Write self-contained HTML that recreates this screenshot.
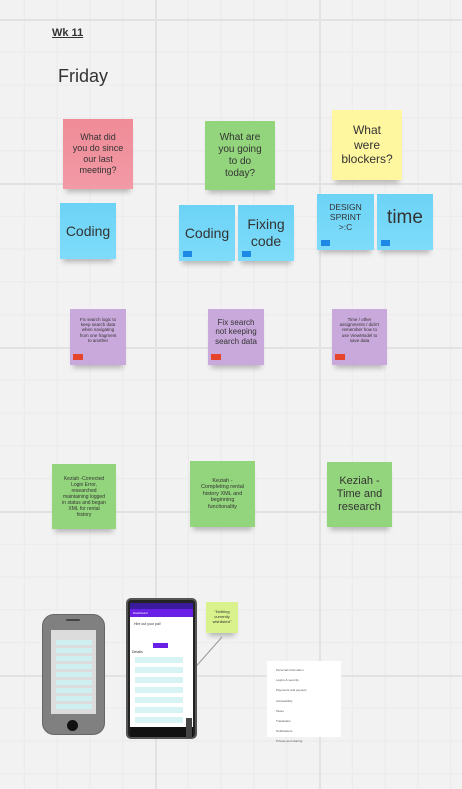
<!DOCTYPE html>
<html><head><meta charset="utf-8"><style>
*{margin:0;padding:0;box-sizing:border-box}
body{width:462px;height:789px;overflow:hidden;position:relative;font-family:"Liberation Sans",sans-serif;color:#333;
background-color:#f2f2f2;
background-image:
linear-gradient(to right,#e2e2e2 2px,transparent 2px),
linear-gradient(to bottom,#e2e2e2 2px,transparent 2px),
linear-gradient(to right,#eaeaea 1px,transparent 1px),
linear-gradient(to bottom,#eaeaea 1px,transparent 1px);
background-size:164px 164px,164px 164px,32.8px 32.8px,32.8px 32.8px;
background-position:-9px 0,0 19px,-9px 0,0 19px;}
.s{position:absolute;display:flex;align-items:center;justify-content:center;text-align:center;line-height:1.2;box-shadow:0 6px 5px -3px rgba(0,0,0,.25);color:#333}
.p{background:linear-gradient(#ef8b97,#f29aa6)}
.g{background:#93d57c}
.y{background:#fff6a0}
.b{background:linear-gradient(#6cd3f6,#7fdcfa)}
.v{background:#c9a9db}
.t{position:absolute;left:4px;bottom:4px;width:9px;height:6px;background:#1e88e5}
.r{position:absolute;left:3px;bottom:5px;width:10px;height:6px;background:#e5452a}
.a{position:absolute}
</style></head><body>
<div class="a" style="left:52px;top:27px;font-size:11px;font-weight:bold;text-decoration:underline;color:#333">Wk 11</div>
<div class="a" style="left:58px;top:66px;font-size:18px;color:#333">Friday</div>

<div class="s p" style="left:63px;top:119px;width:70px;height:70px;font-size:9px">What did<br>you do since<br>our last<br>meeting?</div>
<div class="s g" style="left:205px;top:121px;width:70px;height:69px;font-size:10px">What are<br>you going<br>to do<br>today?</div>
<div class="s y" style="left:332px;top:110px;width:70px;height:70px;font-size:12px">What<br>were<br>blockers?</div>

<div class="s b" style="left:60px;top:203px;width:56px;height:56px;font-size:14px">Coding</div>
<div class="s b" style="left:179px;top:205px;width:56px;height:56px;font-size:14px">Coding<span class="t"></span></div>
<div class="s b" style="left:238px;top:205px;width:56px;height:56px;font-size:14px">Fixing<br>code<span class="t"></span></div>
<div class="s b" style="left:317px;top:194px;width:57px;height:56px;font-size:8.5px;padding-bottom:10px">DESIGN<br>SPRINT<br>&gt;:C<span class="t"></span></div>
<div class="s b" style="left:377px;top:194px;width:56px;height:56px;font-size:19px;padding-bottom:8px">time<span class="t"></span></div>

<div class="s v" style="left:70px;top:309px;width:56px;height:56px;font-size:4.5px;padding-bottom:14px">Fix search logic to<br>keep search data<br>when navigating<br>from one fragment<br>to another<span class="r"></span></div>
<div class="s v" style="left:208px;top:309px;width:56px;height:56px;font-size:8px;padding-bottom:10px">Fix search<br>not keeping<br>search data<span class="r"></span></div>
<div class="s v" style="left:332px;top:309px;width:55px;height:56px;font-size:4.5px;padding-bottom:14px">Time / other<br>assignments / didn't<br>remember how to<br>use ViewModel to<br>save data<span class="r"></span></div>

<div class="s g" style="left:52px;top:464px;width:64px;height:65px;font-size:5px">Keziah -Corrected<br>Login Error,<br>researched<br>maintaining logged<br>in status and began<br>XML for rental<br>history</div>
<div class="s g" style="left:190px;top:461px;width:65px;height:66px;font-size:5.5px">Keziah -<br>Completing rental<br>history XML and<br>beginning<br>functionality</div>
<div class="s g" style="left:327px;top:462px;width:65px;height:65px;font-size:11px">Keziah -<br>Time and<br>research</div>

<div class="s" style="left:206px;top:602px;width:32px;height:31px;font-size:4px;background:#d9f28c">"Nothing<br>currently<br>wishlisted"</div>
<svg class="a" style="left:170px;top:630px" width="60" height="70"><line x1="52" y1="7" x2="7" y2="58" stroke="#999" stroke-width="1"/></svg>

<div class="a" style="left:42px;top:614px;width:63px;height:121px;background:#808080;border-radius:12px;border:1px solid #666"></div>
<div class="a" style="left:66px;top:619px;width:14px;height:2px;background:#444;border-radius:1px"></div>
<div class="a" style="left:51px;top:630px;width:45px;height:84px;background:#dcdcdc"></div>
<div class="a" style="left:56px;top:640px;width:36px;height:70px;background:repeating-linear-gradient(#cdeff0 0 5px,transparent 5px 8px)"></div>
<div class="a" style="left:67px;top:720px;width:11px;height:11px;background:#111;border-radius:50%"></div>

<div class="a" style="left:126px;top:598px;width:71px;height:141px;background:#222;border-radius:5px;border:2px solid #555"></div>
<div class="a" style="left:130px;top:603px;width:63px;height:6px;background:#3a1b9c"></div>
<div class="a" style="left:130px;top:609px;width:63px;height:8px;background:#6a1fe6;font-size:3px;color:#fff;padding:2px 3px">Dashboard</div>
<div class="a" style="left:130px;top:617px;width:63px;height:110px;background:#fff"></div>
<div class="a" style="left:134px;top:622px;font-size:3.5px;color:#333">Hire out your pal!</div>
<div class="a" style="left:153px;top:643px;width:15px;height:5px;background:#6a1fe6"></div>
<div class="a" style="left:132px;top:650px;font-size:3.5px;color:#333">Details</div>
<div class="a" style="left:135px;top:657px;width:48px;height:70px;background:repeating-linear-gradient(#d7f3f4 0 6px,transparent 6px 10px)"></div>
<div class="a" style="left:130px;top:727px;width:63px;height:10px;background:#111"></div>
<div class="a" style="left:186px;top:718px;width:6px;height:20px;background:#444"></div>

<div class="a" style="left:267px;top:661px;width:74px;height:76px;background:#fff;font-size:3px;color:#555">
<div style="padding:4px 0 0 9px;line-height:10.2px">Personal information<br>Logins &amp; security<br>Payments and payouts<br>Accessibility<br>Taxes<br>Translation<br>Notifications<br>Privacy and sharing</div>
</div>
</body></html>
